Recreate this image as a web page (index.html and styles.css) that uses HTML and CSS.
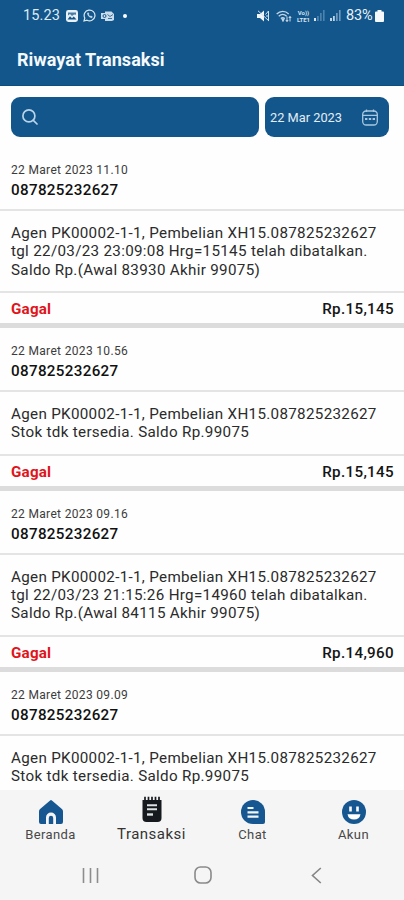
FILE: index.html
```
<!DOCTYPE html>
<html lang="id">
<head>
<meta charset="utf-8">
<title>Riwayat Transaksi</title>
<link rel="stylesheet" href="styles.css">
</head>
<body>
<div class="screen">
  <header class="header">
    <div class="status">
      <span class="clock">15.23</span>
      <svg class="st-photo" width="12" height="12" viewBox="0 0 12 12"><rect width="12" height="12" rx="2.400" fill="#e8f1f8"/><path d="M1.500 9.500 4 6.200l2 2 1.700-1.700 2.800 3z" fill="#13568b"/><path d="M2 2.500h8v2.300L8 4.500 6 6 4 4 2 5.500z" fill="#13568b" opacity=".75"/></svg>
      <svg class="st-wa" width="13" height="13" viewBox="0 0 13 13" fill="none" stroke="#dce9f3"><path d="M1 12l.8-3A5.400 5.400 0 1 1 4 11.200z" stroke-width="1.200"/><path d="M4.400 4c0 2.600 2 4.700 4.600 4.800l.3-1.200-1.500-.7-.7.6-1.600-1.700.5-.7-.6-1.400z" fill="#dce9f3" stroke-width=".4"/></svg>
      <svg class="st-mail" width="13" height="12" viewBox="0 0 13 12"><path d="M0 3h4V1.500h6.500L13 4v6l-2 1H4V9H0z" fill="#c9dceb"/><circle cx="3.500" cy="6" r="1.500" fill="none" stroke="#13568b"/><path d="M6.500 4.500 9 6.500l3-2M7 8.500h4" fill="none" stroke="#13568b" stroke-width=".8"/></svg>
      <i class="st-dot"></i>
      <span class="grow"></span>
      <svg class="st-mute" width="13" height="12" viewBox="0 0 13 12"><path d="M0 4h3l4-3.500v11L3 8H0z" fill="#f1f6fa"/><path d="M1 .8 12 11M8.500 4.500l3-3.500M9 6h3M11.500 1v10" stroke="#d3e2ee" fill="none"/></svg>
      <svg class="st-wifi" width="16" height="12" viewBox="0 0 16 12" fill="none" stroke="#bfd4e5" stroke-width="1.300"><path d="M.7 4c3.500-3.600 8.600-3.600 12 0M2.700 6.300c2.400-2.300 5.600-2.300 8 0M4.800 8.500c1.300-1.100 2.600-1.100 3.900 0"/><path d="M6 9h2l-1 2z" fill="#bfd4e5"/><path d="M11 6.500v5M9.800 10l1.200 1.500L12.200 10M14 11.500v-5M12.800 8 14 6.500 15.200 8" stroke="#fff" stroke-width=".8"/></svg>
      <span class="volte"><b>Vo))</b><b>LTE1</b></span>
      <svg class="st-sig" width="11" height="11" viewBox="0 0 11 11"><path d="M0 8h2v3H0z" fill="#dce9f3"/><path d="M3 6h1.800v5H3zM6 3h1.700v8H6zM9 0h1.600v11H9z" fill="#4d82ad"/></svg>
      <svg class="st-sig2" width="11" height="11" viewBox="0 0 11 11"><path d="M0 8h2v3H0zM3 6h1.800v5H3z" fill="#bfd4e5"/><path d="M6 3h1.700v8H6zM9 0h1.600v11H9z" fill="#6e9bbf"/></svg>
      <span class="pct">83%</span>
      <svg class="st-bat" width="9" height="12" viewBox="0 0 9 12"><path d="M2.500 0h4v1.500H8q1 0 1 1V11q0 1-1 1H1q-1 0-1-1V2.500q0-1 1-1h1.500z" fill="#f5f9fc"/></svg>
    </div>
    <h1>Riwayat Transaksi</h1>
  </header>

  <div class="filters">
    <div class="search">
      <svg width="16" height="16" viewBox="0 0 16 16" fill="none" stroke="#b9d3e8" stroke-width="1.700" stroke-linecap="round"><circle cx="6.900" cy="6.900" r="6"/><path d="M11.300 11.300 15 15"/></svg>
    </div>
    <div class="date">
      <span>22 Mar 2023</span>
      <svg width="16" height="17" viewBox="0 0 16 17" fill="none" stroke="#a9c7e0" stroke-width="1.300"><rect x=".7" y="2" width="14.600" height="14" rx="3.500"/><path d="M.7 6.300h14.600M4.500.5v2.500M11.500.5v2.500"/><path d="M3 10h10" stroke-width="1.800" stroke-dasharray="2.400 1.400"/></svg>
    </div>
  </div>

  <main class="list">
    <article class="item">
      <div class="head"><time>22 Maret 2023 11.10</time><strong>087825232627</strong></div>
      <p class="body"><span>Agen PK00002-1-1, Pembelian XH15.087825232627</span><span>tgl 22/03/23 23:09:08 Hrg=15145 telah dibatalkan.</span><span>Saldo Rp.(Awal 83930 Akhir 99075)</span></p>
      <div class="foot"><b class="fail">Gagal</b><b class="price">Rp.15,145</b></div>
    </article>
    <article class="item">
      <div class="head"><time>22 Maret 2023 10.56</time><strong>087825232627</strong></div>
      <p class="body"><span>Agen PK00002-1-1, Pembelian XH15.087825232627</span><span>Stok tdk tersedia. Saldo Rp.99075</span></p>
      <div class="foot"><b class="fail">Gagal</b><b class="price">Rp.15,145</b></div>
    </article>
    <article class="item">
      <div class="head"><time>22 Maret 2023 09.16</time><strong>087825232627</strong></div>
      <p class="body"><span>Agen PK00002-1-1, Pembelian XH15.087825232627</span><span>tgl 22/03/23 21:15:26 Hrg=14960 telah dibatalkan.</span><span>Saldo Rp.(Awal 84115 Akhir 99075)</span></p>
      <div class="foot"><b class="fail">Gagal</b><b class="price">Rp.14,960</b></div>
    </article>
    <article class="item">
      <div class="head"><time>22 Maret 2023 09.09</time><strong>087825232627</strong></div>
      <p class="body"><span>Agen PK00002-1-1, Pembelian XH15.087825232627</span><span>Stok tdk tersedia. Saldo Rp.99075</span></p>
    </article>
  </main>

  <nav class="tabs">
    <div class="tab">
      <svg width="26" height="26" viewBox="0 0 26 26"><path d="M12.100 1.500q.9-.8 1.800 0l10 8.600q1.100 1 1.100 2.400V23q0 2-2 2h-5v-6.500a5 5 0 0 0-10 0V25H3q-2 0-2-2V12.500q0-1.400 1.100-2.400z" fill="#175791"/><path d="M10.800 25v-6a2.200 2.200 0 0 1 4.400 0v6z" fill="#175791"/></svg>
      <span>Beranda</span>
    </div>
    <div class="tab active">
      <svg width="20" height="27" viewBox="0 0 20 27"><path d="M.5 4h19v18q0 4-4 4h-11q-4 0-4-4z" fill="#16191d"/><path d="M3 5V.8M6.500 5V.8M10 5V.8M13.500 5V.8M17 5V.8" stroke="#16191d" stroke-width="1.700"/><path d="M5 9.200h10M5 13.300h10" stroke="#dfe2e4" stroke-width="2"/><path d="M5 18.500h6" stroke="#dfe2e4" stroke-width="2.400"/></svg>
      <span>Transaksi</span>
    </div>
    <div class="tab">
      <svg width="26" height="26" viewBox="0 0 26 26"><path d="M13 1a12 12 0 0 1 12 12v10q0 2-2 2H13a12 12 0 0 1 0-24z" fill="#175791"/><path d="M7.500 9h6M7.500 13.300h11M7.500 17.600h11" stroke="#f2f6fa" stroke-width="2.200"/></svg>
      <span>Chat</span>
    </div>
    <div class="tab">
      <svg width="26" height="26" viewBox="0 0 26 26"><circle cx="13" cy="13" r="12" fill="#175791"/><path d="M9.500 7.500v5M16.500 7.500v5" stroke="#fff" stroke-width="2.600"/><path d="M6.500 15.200h13q-1 5.300-6.500 5.300t-6.500-5.300z" fill="#fff"/></svg>
      <span>Akun</span>
    </div>
  </nav>
  <div class="sysnav">
    <svg width="17" height="17" viewBox="0 0 17 17"><path d="M1.500 1v15M8.500 1v15M15.500 1v15" stroke="#8d8d8d" stroke-width="1.600"/></svg>
    <svg class="home" width="18" height="18" viewBox="0 0 18 18"><rect x="1" y="1" width="16" height="16" rx="5.500" fill="none" stroke="#8a8a8a" stroke-width="1.600"/></svg>
    <svg width="11" height="17" viewBox="0 0 11 17"><path d="M9.800 1 1.500 8.500l8.300 7.500" fill="none" stroke="#858585" stroke-width="1.600"/></svg>
  </div>
</div>
</body>
</html>
```
FILE: styles.css
```
* { box-sizing: border-box; }
body { margin: 0; background: #fff; font-family: Roboto, "Liberation Sans", sans-serif; }
.screen { width: 404px; height: 900px; display: flex; flex-direction: column; overflow: hidden; background: #fefefe; }
svg { display: block; flex: none; }

.header { height: 86px; flex: none; background: #13568b; color: #f4f9fd; border-bottom: 1px solid #0e4d80; }
.status { display: flex; align-items: center; height: 31px; padding: 0 20px 0 23px; }
.clock { font-size: 14.5px; letter-spacing: 0.1px; width: 43px; color: #dfeaf3; }
.st-wa { margin-left: 5px; }
.st-mail { margin-left: 5px; }
.st-dot { width: 4px; height: 4px; border-radius: 50%; background: #fff; margin-left: 9px; }
.grow { flex: 1; }
.st-wifi { margin-left: 6px; }
.volte { display: grid; grid-template-rows: 7px 7px; width: 15px; margin-left: 4px; font-size: 6px; line-height: 7px; color: #d5e4f0; text-align: center; }
.st-sig { margin-left: 3px; }
.st-sig2 { margin-left: 5px; }
.pct { font-size: 14.5px; margin-left: 5px; width: 28px; color: #e8f1f7; letter-spacing: -0.2px; }
.st-bat { margin-left: 1px; }
h1 { margin: 18px 0 0 17px; font-size: 18px; line-height: 21px; font-weight: 700; letter-spacing: 0.05px; }

.filters { display: flex; gap: 6px; padding: 11px 15px 0 11px; height: 61px; flex: none; }
.search, .date { height: 40px; border-radius: 9px; background: #13568b; display: flex; align-items: center; }
.search { width: 248px; padding-left: 11px; }
.date { width: 124px; padding: 0 11px 0 5px; justify-content: space-between; color: #e3edf5; font-size: 12.8px; }

.list { flex: 1; min-height: 0; overflow: hidden; }
.item { border-bottom: 5px solid #dcdcdc; }
.head { height: 64px; padding: 15px 11px 0; border-bottom: 2px solid #e4e4e4; }
time { display: block; font-size: 12px; line-height: 16px; letter-spacing: 0.33px; color: #3c3c3c; }
strong { display: block; margin-top: 2px; font-size: 15.2px; line-height: 20px; font-weight: 500; letter-spacing: 0.33px; color: #111; }
.body { margin: 0; padding: 13px 11px 11.8px; font-size: 15.2px; line-height: 18.4px; letter-spacing: 0.31px; color: #2b2b2b; border-bottom: 2px solid #e4e4e4; }
.body span { display: block; white-space: nowrap; }
.foot { display: flex; justify-content: space-between; align-items: center; height: 30px; padding: 2px 10px 0 11px; font-size: 15.2px; }
.fail { color: #e0151b; font-weight: 700; letter-spacing: 0.2px; }
.price { color: #151515; font-weight: 500; letter-spacing: 0.33px; }

.tabs { height: 60px; flex: none; background: #f5f5f5; display: grid; grid-template-columns: repeat(4, 1fr); }
.tab { display: flex; flex-direction: column; align-items: center; padding-top: 9px; font-size: 13px; color: #484848; }
.tab span { line-height: 16px; margin-top: 2px; letter-spacing: 0.4px; }
.tab.active { padding-top: 6px; font-size: 15px; color: #333; }
.tab.active span { margin-top: 3px; letter-spacing: 0.5px; }
.sysnav { height: 50px; flex: none; background: #f5f5f5; display: flex; justify-content: space-between; align-items: center; padding: 0 82px; }
.home { margin-right: 4px; }
```
